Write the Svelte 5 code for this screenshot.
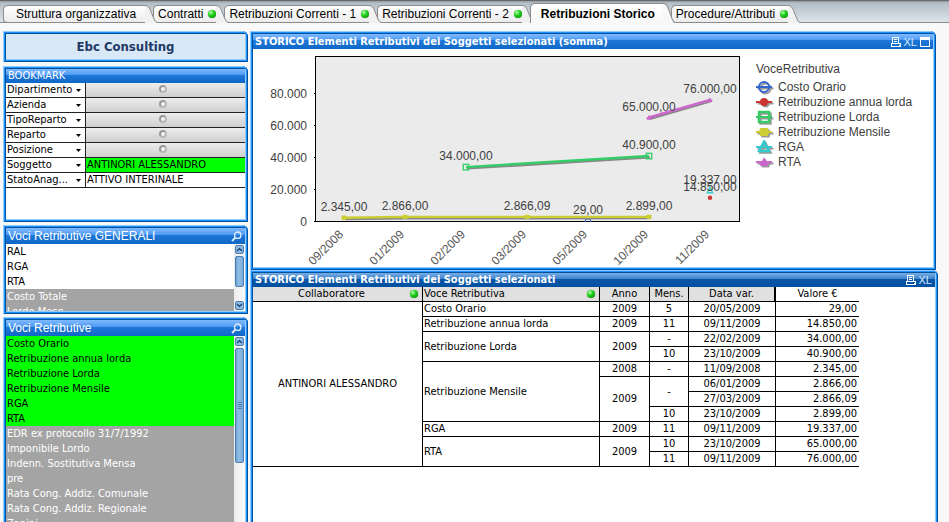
<script>
  const tabs = [
    { label: 'Struttura organizzativa', first: true },
    { label: 'Contratti', dot: true },
    { label: 'Retribuzioni Correnti - 1', dot: true },
    { label: 'Retribuzioni Correnti - 2', dot: true },
    { label: 'Retribuzioni Storico', active: true },
    { label: 'Procedure/Attributi', dot: true }
  ];

  const fields = [
    { id: 'dipartimento', label: 'Dipartimento' },
    { id: 'azienda', label: 'Azienda' },
    { id: 'tiporeparto', label: 'TipoReparto' },
    { id: 'reparto', label: 'Reparto' },
    { id: 'posizione', label: 'Posizione' },
    { id: 'soggetto', label: 'Soggetto', value: 'ANTINORI ALESSANDRO', selected: true },
    { id: 'stato', label: 'StatoAnag...', value: 'ATTIVO INTERINALE' }
  ];

  const generali = [
    { t: 'RAL', s: 'open' }, { t: 'RGA', s: 'open' }, { t: 'RTA', s: 'open' },
    { t: 'Costo Totale', s: 'off' }, { t: 'Lordo Mese', s: 'off' }
  ];

  const voci = [
    ...['Costo Orario', 'Retribuzione annua lorda', 'Retribuzione Lorda', 'Retribuzione Mensile', 'RGA', 'RTA'].map((t) => ({ t, s: 'on' })),
    ...['EDR ex protocollo 31/7/1992', 'Imponibile Lordo', 'Indenn. Sostitutiva Mensa', 'pre', 'Rata Cong. Addiz. Comunale', 'Rata Cong. Addiz. Regionale', 'Zanini'].map((t) => ({ t, s: 'off' }))
  ];

  const months = ['09/2008', '01/2009', '02/2009', '03/2009', '05/2009', '10/2009', '11/2009'];
  const px = (i) => 91 + i * 61;
  const py = (v) => 172.5 - v * 0.0016;
  const ticks = [[80000, '80.000'], [60000, '60.000'], [40000, '40.000'], [20000, '20.000'], [0, '0']];

  const series = [
    { name: 'Costo Orario', color: '#3366cc', shape: 'ring', pts: [[4, 29, '29,00']] },
    { name: 'Retribuzione annua lorda', color: '#cc3333', shape: 'disc', pts: [[6, 14850, '14.850,00']] },
    { name: 'Retribuzione Lorda', color: '#33cc66', shape: 'box', pts: [[2, 34000, '34.000,00'], [5, 40900, '40.900,00']] },
    { name: 'Retribuzione Mensile', color: '#cccc33', shape: 'block', pts: [[0, 2345, '2.345,00'], [1, 2866, '2.866,00'], [3, 2866.09, '2.866,09'], [5, 2899, '2.899,00']] },
    { name: 'RGA', color: '#33cccc', shape: 'tri', pts: [[6, 19337, '19.337,00']] },
    { name: 'RTA', color: '#cc66cc', shape: 'star', pts: [[5, 65000, '65.000,00'], [6, 76000, '76.000,00']] }
  ];
  const line = (s) => s.pts.map(([i, v]) => `${px(i)},${py(v)}`).join(' ');

  // Each row lists only the cells that start in it: [text, rowspan, class]
  const rows = [
    [['ANTINORI ALESSANDRO', 11, 'mid'], ['Costo Orario', 1, 'voce'], ['2009', 1, 'mid'], ['5', 1, 'mid'], ['20/05/2009', 1, 'mid'], ['29,00', 1, 'num']],
    [['Retribuzione annua lorda', 1, 'voce'], ['2009', 1, 'mid'], ['11', 1, 'mid'], ['09/11/2009', 1, 'mid'], ['14.850,00', 1, 'num']],
    [['Retribuzione Lorda', 2, 'voce'], ['2009', 2, 'mid'], ['-', 1, 'mid'], ['22/02/2009', 1, 'mid'], ['34.000,00', 1, 'num']],
    [['10', 1, 'mid'], ['23/10/2009', 1, 'mid'], ['40.900,00', 1, 'num']],
    [['Retribuzione Mensile', 4, 'voce'], ['2008', 1, 'mid'], ['-', 1, 'mid'], ['11/09/2008', 1, 'mid'], ['2.345,00', 1, 'num']],
    [['2009', 3, 'mid'], ['-', 2, 'mid'], ['06/01/2009', 1, 'mid'], ['2.866,00', 1, 'num']],
    [['27/03/2009', 1, 'mid'], ['2.866,09', 1, 'num']],
    [['10', 1, 'mid'], ['23/10/2009', 1, 'mid'], ['2.899,00', 1, 'num']],
    [['RGA', 1, 'voce'], ['2009', 1, 'mid'], ['11', 1, 'mid'], ['09/11/2009', 1, 'mid'], ['19.337,00', 1, 'num']],
    [['RTA', 2, 'voce'], ['2009', 2, 'mid'], ['10', 1, 'mid'], ['23/10/2009', 1, 'mid'], ['65.000,00', 1, 'num']],
    [['11', 1, 'mid'], ['09/11/2009', 1, 'mid'], ['76.000,00', 1, 'num']]
  ];
</script>

{#snippet searchIcon()}
  <svg width="11" height="11" viewBox="0 0 11 11" fill="none" stroke="#dcebfb">
    <circle cx="6.7" cy="4.2" r="3.2" stroke-width="1.4" />
    <path d="M4.4 6.6 L1 10" stroke-width="2" />
  </svg>
{/snippet}

{#snippet printIcon()}
  <svg width="10" height="10" viewBox="0 0 10 10" fill="none" stroke="#fff" shape-rendering="crispEdges">
    <path d="M1.5 6V.5H7.5V6M3 2.5H6M3 4.5H6M.5 9.5V6.5H9.5V9.5ZM8 8.5H9" />
  </svg>
{/snippet}

{#snippet scrollArrow(dir)}
  <button class="sbtn" aria-label={dir === 'up' ? 'Scorri su' : 'Scorri giù'}>
    <svg width="7" height="5" viewBox="0 0 7 5" fill="none" stroke="#123a66" stroke-width="1.2">
      <path d={dir === 'up' ? 'M1 4L3.5 1.5L6 4' : 'M1 1L3.5 3.5L6 1'} />
    </svg>
  </button>
{/snippet}

{#snippet marker(shape, color)}
  {#if shape === 'ring'}
    <circle r="5" fill="none" stroke={color} stroke-width="2" />
  {:else if shape === 'disc'}
    <circle r="4" fill={color} />
  {:else if shape === 'box'}
    <rect x="-5" y="-5" width="10" height="10" fill="none" stroke={color} stroke-width="2.4" />
  {:else if shape === 'block'}
    <rect x="-4.5" y="-4" width="9" height="8" rx="1.5" fill={color} />
  {:else if shape === 'tri'}
    <path d="M0 -5.5L5 4H-5Z" fill="none" stroke={color} stroke-width="2.4" />
  {:else}
    <path d="M0 -5L2 -1L5 0L3.5 4H-3.5L-5 0L-2 -1Z" fill={color} />
  {/if}
{/snippet}

<div class="app">
  <nav class="tabs">
    {#each tabs as tab, i}
      <button class="tab" class:active={tab.active} class:first={tab.first} style="z-index: {tab.active ? 20 : 10 - i}">
        <span class="face">
          {tab.label}
          {#if tab.dot}<span class="dot"></span>{/if}
        </span>
        <svg class="cap" viewBox="0 0 12 18" preserveAspectRatio="none">
          <path d="M0 0.5C3 0.5 4 2 5.5 5.5L9 14Q10.2 17 12 17.5V18H0Z" fill={tab.active ? '#f7f7f7' : '#f1f1f1'} />
          <path d="M0 0.5C3 0.5 4 2 5.5 5.5L9 14Q10.2 17 12 17.5" fill="none" stroke="#8b8b8b" />
        </svg>
      </button>
    {/each}
  </nav>

  <main class="work">
    <aside class="side">
      <section class="panel brand"><h1>Ebc Consulting</h1></section>

      <section class="panel bookmark">
        <header class="bar small">BOOKMARK</header>
        {#each fields as f}
          <div class="field">
            <label for={f.id}>{f.label}
              <svg width="5" height="3" viewBox="0 0 5 3"><path d="M0 0H5L2.5 3Z" fill="#000" /></svg>
            </label>
            <div class="value" class:green={f.selected} class:white={f.value && !f.selected}>
              <select id={f.id}><option>{f.value ?? ''}</option></select>
              {#if !f.value}<span class="ring"></span>{/if}
            </div>
          </div>
        {/each}
      </section>

      <section class="panel generali">
        <header class="bar list-bar">Voci Retributive GENERALI <button class="ico" aria-label="Cerca">{@render searchIcon()}</button></header>
        <div class="list">
          <ul>
            {#each generali as v}<li><button class={v.s}>{v.t}</button></li>{/each}
          </ul>
          <div class="scroll">
            {@render scrollArrow('up')}
            <span class="thumb short"></span>
            <span class="space"></span>
            {@render scrollArrow('down')}
          </div>
        </div>
      </section>

      <section class="panel voci">
        <header class="bar list-bar">Voci Retributive <button class="ico" aria-label="Cerca">{@render searchIcon()}</button></header>
        <div class="list">
          <ul>
            {#each voci as v}<li><button class={v.s}>{v.t}</button></li>{/each}
          </ul>
          <div class="scroll">
            {@render scrollArrow('up')}
            <span class="thumb long"><i></i><i></i><i></i><i></i></span>
          </div>
        </div>
      </section>
    </aside>

    <div class="content">
      <section class="panel chart">
        <header class="bar bold">
          <h2>STORICO Elementi Retributivi dei Soggetti selezionati (somma)</h2>
          <span class="tools">
            <button class="ico" aria-label="Stampa">{@render printIcon()}</button>
            <button class="ico xl">XL</button>
            <button class="ico" aria-label="Ingrandisci">
              <svg width="10" height="10" viewBox="0 0 10 10" shape-rendering="crispEdges">
                <path d="M.5 .5H9.5V9.5H.5Z" fill="none" stroke="#fff" /><path d="M0 0H10V3H0Z" fill="#fff" />
              </svg>
            </button>
          </span>
        </header>
        <div class="chart-body">
          <svg class="plot" width="490" height="218" viewBox="0 0 490 218">
            <clipPath id="area"><rect x="62" y="7" width="425" height="166" /></clipPath>
            <rect x="62.5" y="7.5" width="424" height="165" fill="#ebebeb" stroke="#000" />
            {#each ticks as [v, t]}
              <path d="M61 {Math.floor(py(v)) + 0.5}H63" stroke="#000" />
              <text x="54" y={py(v) + 4} text-anchor="end">{t}</text>
            {/each}
            {#each months as m, i}
              <text class="month" text-anchor="end" transform="translate({px(i)} 186) rotate(-45)">{m}</text>
            {/each}
            <g clip-path="url(#area)">
              {#each series as s}
                {#if s.pts.length > 1}
                  <polyline points={line(s)} fill="none" stroke="#888" stroke-width="2" transform="translate(1 1.5)" />
                  <polyline points={line(s)} fill="none" stroke={s.color} stroke-width="2.4" />
                {/if}
                {#each s.pts as [i, v]}
                  <g transform="translate({px(i)} {py(v)}) scale(0.55)">{@render marker(s.shape, s.color)}</g>
                {/each}
              {/each}
            </g>
            {#each series as s}
              {#each s.pts as [i, v, t]}
                <text x={px(i)} y={py(v) - 7} text-anchor="middle">{t}</text>
              {/each}
            {/each}
          </svg>
          <div class="legend">
            <h3>VoceRetributiva</h3>
            {#each series as s}
              <div class="key">
                <svg width="18" height="15" viewBox="-8 -7 18 15">
                  <g transform="translate(1.5 1.5)"><path d="M-8 0H8" stroke="#999" stroke-width="2" />{@render marker(s.shape, '#999')}</g>
                  <path d="M-8 0H8" stroke={s.color} stroke-width="2" />{@render marker(s.shape, s.color)}
                </svg>
                {s.name}
              </div>
            {/each}
          </div>
        </div>
      </section>

      <section class="panel data">
        <header class="bar bold dark">
          <h2>STORICO Elementi Retributivi dei Soggetti selezionati</h2>
          <span class="tools">
            <button class="ico" aria-label="Stampa">{@render printIcon()}</button>
            <button class="ico xl">XL</button>
          </span>
        </header>
        <table>
          <colgroup>
            <col class="c1" /><col class="c2" /><col class="c3" /><col class="c4" /><col class="c5" /><col class="c6" />
          </colgroup>
          <thead>
            <tr>
              <th><div class="head"><span class="grow">Collaboratore</span><span class="dot"></span></div></th>
              <th><div class="head left"><span class="grow">Voce Retributiva</span><span class="dot"></span></div></th>
              <th>Anno</th>
              <th>Mens.</th>
              <th class="thick">Data var.</th>
              <th class="plain">Valore €</th>
            </tr>
          </thead>
          <tbody>
            {#each rows as r}
              <tr>{#each r as [t, span, cls]}<td rowspan={span} class={cls}>{t}</td>{/each}</tr>
            {/each}
          </tbody>
        </table>
      </section>
    </div>
  </main>
</div>

<style>
  :global(body) { background: #f8f8f8; }
  * { box-sizing: border-box; }
  button, select { font: inherit; color: inherit; border: 0; background: none; padding: 0; margin: 0; border-radius: 0; }
  h1, h2, h3, ul { margin: 0; padding: 0; font: inherit; }
  ul { list-style: none; }
  svg { display: block; flex: none; }

  .app {
    height: 100vh;
    overflow: hidden;
    display: flex;
    flex-direction: column;
    background: #f8f8f8;
    color: #000;
    font: 11px/14px "DejaVu Sans Condensed", "DejaVu Sans", sans-serif;
  }

  .tabs {
    flex: none;
    height: 23px;
    display: flex;
    align-items: flex-end;
    padding-left: 3px;
    border-top: 1px solid #686868;
    background: linear-gradient(#8f979e, #b4bec6 2px, #dce4ea 21px, #8b8b8b 21px);
    font: 12px/16px "Liberation Sans", Arial, sans-serif;
  }
  .tab { position: relative; display: flex; height: 18px; margin-left: -4px; white-space: nowrap; }
  .tab.first { margin-left: 0; }
  .face {
    display: flex;
    align-items: center;
    gap: 5px;
    padding-left: 4px;
    border: 1px solid #8b8b8b;
    border-right-width: 0;
    border-radius: 5px 0 0 4px;
    background: linear-gradient(#fff, #ececec);
  }
  .cap { width: 12px; height: 100%; }
  .first .face { padding: 0 9px 0 12px; }
  .tab.active { height: 20px; font-weight: bold; }
  .active .face { padding: 0 8px 0 10px; border-bottom: 0; border-radius: 5px 0 0 0; background: linear-gradient(#fff, #f8f8f8); }
  .dot {
    flex: none;
    width: 8px;
    height: 8px;
    border-radius: 50%;
    background: radial-gradient(circle at 35% 30%, #b8ffb0, #1fd01a 40%, #079a05 80%);
    box-shadow: 0 0 1px #6a6a6a;
  }

  .work { flex: 1; min-height: 0; display: flex; gap: 2px; padding: 8px 11px 0 3px; }
  .side { flex: none; width: 245px; display: flex; flex-direction: column; gap: 3px; }
  .content { flex: 1; min-width: 0; display: flex; flex-direction: column; }

  .panel {
    display: flex;
    flex-direction: column;
    flex: none;
    padding: 3px;
    border-radius: 0 6px 0 0;
    overflow: hidden;
    background: #fff;
    box-shadow:
      inset 1px 1px #8fccff, inset -1px -1px #00529c,
      inset 2px 2px #1e90ff, inset -2px -2px #1e90ff,
      inset 3px 3px #00529c, inset -3px -3px #8fccff;
  }
  .brand {
    height: 31px;
    margin-bottom: 1px;
    background: #d9e8f7;
    align-items: center;
    justify-content: center;
    color: #1f3864;
    font-size: 13px;
    font-weight: bold;
  }
  .bookmark { height: 156px; }
  .generali { height: 89px; }
  .voci { flex: 1 0 240px; }
  .chart { height: 239px; margin-right: 2px; }
  .data { flex: 1 0 260px; }

  .bar {
    flex: none;
    display: flex;
    align-items: center;
    justify-content: space-between;
    height: 15px;
    padding: 0 3px 0 2px;
    color: #fff;
    white-space: nowrap;
    background: linear-gradient(#80baff, #4d99f2 42%, #1f78d8 43%, #0f67c6);
  }
  .small { height: 14px; }
  .list-bar { height: 16px; font: 12px/16px "Liberation Sans", Arial, sans-serif; }
  .bold { font-weight: bold; }
  .dark { height: 14px; background: linear-gradient(#78aee6, #3f82cb 42%, #0a56a8 43%, #0050a0); }
  .tools { display: flex; align-items: center; gap: 3px; }
  .ico { display: flex; align-items: center; }
  .xl { color: #d6e8fc; font: 11px/12px "Liberation Sans Narrow", "Liberation Sans", sans-serif; }

  .field { display: flex; height: 15px; border-bottom: 1px solid #222; }
  .field label { flex: 1; display: flex; align-items: center; justify-content: space-between; padding: 0 4px 0 1px; }
  .value { position: relative; width: 160px; border-left: 1px solid #222; background: linear-gradient(#ededed, #cfcfcf); }
  .value.green { background: #0f0; }
  .value.white { background: #fff; }
  .value select { display: block; appearance: none; width: 100%; height: 14px; padding-left: 1px; line-height: 14px; }
  .ring {
    position: absolute;
    inset: 2px 6px 0 0;
    margin: 0 auto;
    width: 8px;
    height: 8px;
    border: 2px solid #9a9a9a;
    border-right-color: #b8b8b8;
    border-bottom-color: #b8b8b8;
    border-radius: 50%;
    background: #f4f4f4;
    pointer-events: none;
  }

  .list { flex: 1; min-height: 0; display: flex; overflow: hidden; }
  .list ul { flex: 1; }
  .list li button { display: block; width: 100%; height: 15px; padding: 0 1px; text-align: left; line-height: 15px; }
  .list .on { background: #0f0; }
  .list .off { background: #a4a4a4; color: #fff; }
  .scroll { width: 11px; display: flex; flex-direction: column; gap: 2px; padding: 1px; background: linear-gradient(90deg, #ececec, #fbfbfb); }
  .sbtn { flex: none; height: 9px; display: flex; align-items: center; justify-content: center; border: 1px solid #4a7db0; border-radius: 2px; background: #8fbbe3; }
  .thumb { flex: none; display: flex; flex-direction: column; align-items: center; justify-content: center; gap: 1px; border: 1px solid #4a7db0; border-radius: 2px; background: linear-gradient(90deg, #6fa5d6, #92bfe6 40%, #78a9d8); }
  .thumb i { width: 4px; height: 1px; background: #4a7db0; }
  .short { height: 31px; }
  .long { height: 115px; }
  .space { flex: 1; }

  .chart-body { display: flex; gap: 13px; color: #404040; font: 12px/15px "Liberation Sans", Arial, sans-serif; }
  .plot text { fill: #404040; }
  .plot .month { fill: #555; }
  .legend { padding-top: 13px; white-space: nowrap; }
  .legend h3 { margin-bottom: 3px; }
  .key { display: flex; align-items: center; gap: 4px; height: 15px; }

  table { width: 606px; table-layout: fixed; border-collapse: separate; border-spacing: 0; }
  .c1 { width: 170px; }
  .c2 { width: 177px; }
  .c3 { width: 50px; }
  .c4 { width: 39px; }
  .c5 { width: 87px; }
  .c6 { width: 83px; }
  th, td { height: 15px; padding: 0; font-weight: normal; line-height: 14px; border: 1px solid #000; border-width: 0 1px 1px 0; white-space: nowrap; }
  th { background: #e0e0e0; text-align: center; }
  th.thick { border-right-width: 2px; }
  th.plain { background: #fff; }
  th:last-child, td.num { border-right: 0; }
  .head { display: flex; align-items: center; height: 14px; padding-right: 4px; }
  .grow { flex: 1; }
  .left { text-align: left; padding-left: 1px; }
  .mid { text-align: center; }
  .voce { padding-left: 1px; }
  .num { text-align: right; padding-right: 2px; }
</style>
